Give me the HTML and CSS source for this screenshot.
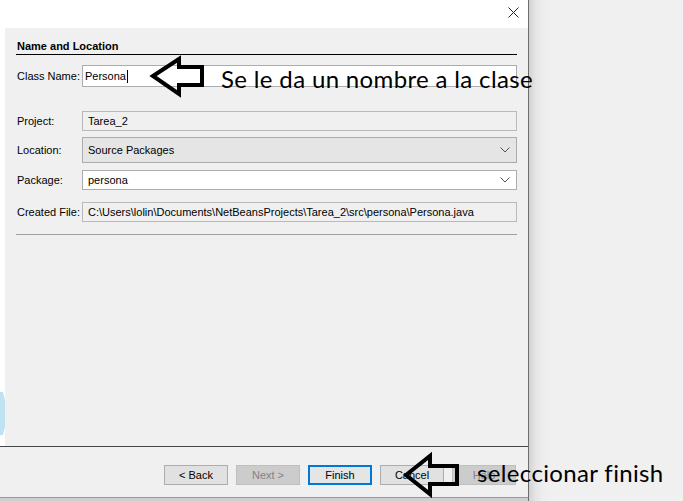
FILE: index.html
```html
<!DOCTYPE html>
<html>
<head>
<meta charset="utf-8">
<link rel="stylesheet" href="styles.css">
</head>
<body>
<div class="screen">
  <div class="dialog">
    <div class="titlebar">
      <svg class="close" width="11" height="11" viewBox="0 0 11 11"><path d="M0.5 0.5 L10.5 10.5 M10.5 0.5 L0.5 10.5" stroke="#222" stroke-width="1"/></svg>
    </div>
    <div class="main">
      <div class="strip"><div class="blob"></div></div>
      <div class="content">
        <div class="section-title">Name and Location</div>
        <div class="row row-class">
          <span class="label">Class Name:</span>
          <div class="field white h22 tight"><span>Persona</span><span class="caret"></span></div>
        </div>
        <div class="row row-project">
          <span class="label">Project:</span>
          <div class="field ro">Tarea_2</div>
        </div>
        <div class="row row-location">
          <span class="label">Location:</span>
          <div class="field combo">Source Packages<svg class="chev" width="10" height="6" viewBox="0 0 10 6"><path d="M0.5 0.5 L5 5 L9.5 0.5" fill="none" stroke="#555" stroke-width="1"/></svg></div>
        </div>
        <div class="row row-package">
          <span class="label">Package:</span>
          <div class="field white">persona<svg class="chev" width="10" height="6" viewBox="0 0 10 6"><path d="M0.5 0.5 L5 5 L9.5 0.5" fill="none" stroke="#555" stroke-width="1"/></svg></div>
        </div>
        <div class="row row-file">
          <span class="label">Created File:</span>
          <div class="field ro">C:\Users\lolin\Documents\NetBeansProjects\Tarea_2\src\persona\Persona.java</div>
        </div>
        <div class="sep"></div>
      </div>
    </div>
    <div class="footer">
      <button class="btn">&lt; Back</button>
      <button class="btn disabled">Next &gt;</button>
      <button class="btn default">Finish</button>
      <button class="btn">Cancel</button>
      <button class="btn disabled">Help</button>
    </div>
    <div class="bottom"></div>
  </div>
  <div class="desktop"></div>

  <div class="note note-top">Se le da un nombre a la clase</div>
  <div class="note note-bottom">seleccionar finish</div>
  <svg class="arrows" width="683" height="501" viewBox="0 0 683 501">
    <polygon points="153,76 179,59 179,67 202,67 202,85 179,85 179,94" fill="none" stroke="#000" stroke-width="4" stroke-linejoin="miter"/>
    <polygon points="406,475 430,456 430,466 457,466 457,484 430,484 430,494" fill="none" stroke="#000" stroke-width="4" stroke-linejoin="miter"/>
  </svg>
</div>
</body>
</html>
```

FILE: styles.css
```css
* { box-sizing: border-box; }
html, body { margin: 0; padding: 0; }
body {
  width: 683px;
  height: 501px;
  overflow: hidden;
  background: #f0f0f0;
  font-family: "Liberation Sans", Arial, sans-serif;
  font-size: 11px;
  color: #000;
}
.screen {
  position: relative;
  display: flex;
  width: 683px;
  height: 501px;
}
.dialog {
  width: 529px;
  height: 501px;
  display: flex;
  flex-direction: column;
  border-right: 1px solid #6d6d6d;
  background: #f0f0f0;
}
.titlebar {
  height: 28px;
  background: #fff;
  display: flex;
  justify-content: flex-end;
  align-items: flex-start;
  padding: 7px 9px 0 0;
}
.main {
  flex: 1;
  display: flex;
}
.strip {
  width: 5px;
  background: #fff;
  display: flex;
  flex-direction: column;
  justify-content: flex-end;
  padding-bottom: 11px;
}
.blob {
  width: 5px;
  height: 43px;
  background: #bde2f0;
  clip-path: polygon(0 0, 60% 0, 100% 20%, 100% 80%, 60% 100%, 0 100%);
}
.content {
  flex: 1;
  padding: 12px 11px 0 11px;
}
.section-title {
  font-weight: bold;
  font-size: 11px;
  line-height: 13px;
  padding-left: 1px;
  padding-bottom: 1px;
  border-bottom: 1px solid #000;
  height: 15px;
}
.row {
  display: flex;
  align-items: center;
}
.label {
  width: 66px;
  padding-left: 1px;
  flex: none;
}
.field {
  flex: 1;
  height: 20px;
  border: 1px solid #b4b4b4;
  display: flex;
  align-items: center;
  padding-left: 5px;
  position: relative;
  white-space: nowrap;
}
.field.h22 { height: 22px; }
.field.tight { padding-left: 2px; }
.white { background: #fff; border-color: #abadb3; }
.ro { background: #f0f0f0; border-color: #b9b9b9; }
.combo { background: #e5e5e5; border-color: #acacac; height: 26px; }
.caret {
  display: inline-block;
  width: 1px;
  height: 13px;
  background: #000;
  margin-left: 1px;
}
.chev {
  position: absolute;
  right: 6px;
  top: 50%;
  margin-top: -3px;
}
.row-class { margin-top: 10px; }
.row-project { margin-top: 24px; }
.row-location { margin-top: 6px; }
.row-package { margin-top: 7px; }
.row-file { margin-top: 12px; }
.sep {
  margin-top: 12px;
  height: 1px;
  background: #a0a0a0;
}
.footer {
  height: 51px;
  border-top: 1px solid #474747;
  display: flex;
  align-items: flex-start;
  padding: 18px 0 0 164px;
  gap: 8px;
}
.btn {
  width: 64px;
  height: 20px;
  font-family: "Liberation Sans", Arial, sans-serif;
  font-size: 11px;
  background: #e1e1e1;
  border: 1px solid #adadad;
  padding: 0;
  color: #000;
}
.btn.disabled {
  background: #cccccc;
  border-color: #bfbfbf;
  color: #838383;
}
.btn.default {
  border: 2px solid #0078d7;
  background: #e5e5e5;
}
.bottom {
  height: 4px;
  border-top: 1px solid #9a9a9a;
  background: #cfcfcf;
}
.desktop {
  flex: 1;
  background: linear-gradient(to right, #d2d2d2 0px, #e4e4e4 6px, #eeeeee 14px, #f0f0f0 20px);
}
.note {
  position: absolute;
  font-family: Lato, "Open Sans", sans-serif;
  font-size: 24px;
  letter-spacing: 0.35px;
  color: #000;
  white-space: nowrap;
  line-height: 1;
}
.note-top { left: 221px; top: 67px; }
.note-bottom { left: 477px; top: 461px; }
.arrows {
  position: absolute;
  left: 0;
  top: 0;
  pointer-events: none;
}
```
